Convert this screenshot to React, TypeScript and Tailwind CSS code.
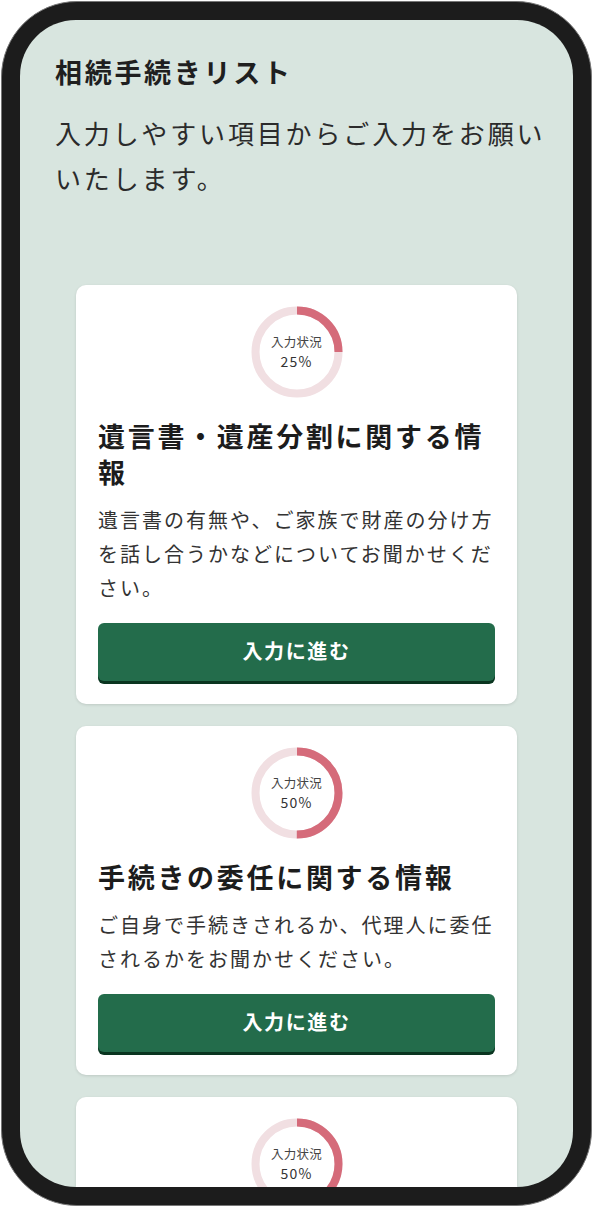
import React from "react";

const font = { fontFamily: '"Noto Sans CJK JP", "Noto Sans", sans-serif' };

function Donut({ pct }: { pct: number }) {
  const r = 41.5;
  const c = 2 * Math.PI * r;
  return (
    <div className="relative w-[92px] h-[92px]">
      <svg width="92" height="92" viewBox="0 0 92 92" className="absolute inset-0">
        <circle cx="46" cy="46" r={r} fill="none" stroke="#f1dfe2" strokeWidth="8" />
        <circle
          cx="46"
          cy="46"
          r={r}
          fill="none"
          stroke="#d56b7a"
          strokeWidth="8"
          strokeDasharray={`${(c * pct) / 100} ${c}`}
          transform="rotate(-90 46 46)"
        />
      </svg>
      <div className="absolute inset-0 flex flex-col items-center justify-center pt-[2px]">
        <span className="text-[12.5px] leading-[16px] tracking-[0.02em] text-[#444]">入力状況</span>
        <span className="text-[14px] leading-[22px] tracking-[0.08em] text-[#333]">{pct}%</span>
      </div>
    </div>
  );
}

function Card({ pct, title, desc }: { pct: number; title: string; desc: string }) {
  return (
    <div className="mx-[56px] mb-[22px] bg-white rounded-[10px] shadow-[0_1px_3px_rgba(0,0,0,0.12)] px-[22px] pt-[21px] pb-[23px] flex flex-col">
      <div className="flex justify-center">
        <Donut pct={pct} />
      </div>
      <h2 className="mt-[20px] text-[27px] leading-[36px] font-bold tracking-[0.1em] text-[#1c1c1c]">{title}</h2>
      <p className="mt-[13px] text-[20px] leading-[34px] tracking-[0.1em] text-[#333]">{desc}</p>
      <button className="mt-[18px] h-[58px] w-full rounded-[6px] bg-[#236c4b] shadow-[0_3px_0_#0a3520] text-white text-[20px] font-bold tracking-[0.08em] pb-[3px]">
        入力に進む
      </button>
    </div>
  );
}

export default function App() {
  return (
    <div className="w-[593px] h-[1207px] bg-white p-[1px]" style={font}>
      <div className="h-full rounded-[76px] bg-[#1c1c1c] border border-[#777] p-[18px]">
        <div className="h-full rounded-[56px] bg-[#d8e5df] overflow-hidden">
          <div className="pl-[35px] pr-[12px] pt-[32px]">
            <h1 className="text-[27px] leading-[40px] font-bold tracking-[0.1em] text-[#1f1f1f]">相続手続きリスト</h1>
            <p className="mt-[18px] text-[26px] leading-[45px] tracking-[0.11em] text-[#2b2b2b]">
              入力しやすい項目からご入力をお願いいたします。
            </p>
          </div>
          <div className="mt-[85px]">
            <Card
              pct={25}
              title="遺言書・遺産分割に関する情報"
              desc="遺言書の有無や、ご家族で財産の分け方を話し合うかなどについてお聞かせください。"
            />
            <Card
              pct={50}
              title="手続きの委任に関する情報"
              desc="ご自身で手続きされるか、代理人に委任されるかをお聞かせください。"
            />
            <Card
              pct={50}
              title="相続人に関する情報"
              desc="相続人の方についてお聞かせください。"
            />
          </div>
        </div>
      </div>
    </div>
  );
}
